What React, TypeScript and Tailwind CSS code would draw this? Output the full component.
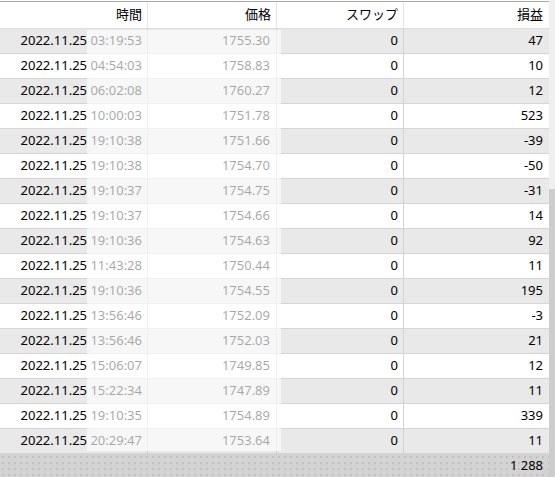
const rows = [
  { time: "03:19:53", price: "1755.30", swap: "0", profit: "47" },
  { time: "04:54:03", price: "1758.83", swap: "0", profit: "10" },
  { time: "06:02:08", price: "1760.27", swap: "0", profit: "12" },
  { time: "10:00:03", price: "1751.78", swap: "0", profit: "523" },
  { time: "19:10:38", price: "1751.66", swap: "0", profit: "-39" },
  { time: "19:10:38", price: "1754.70", swap: "0", profit: "-50" },
  { time: "19:10:37", price: "1754.75", swap: "0", profit: "-31" },
  { time: "19:10:37", price: "1754.66", swap: "0", profit: "14" },
  { time: "19:10:36", price: "1754.63", swap: "0", profit: "92" },
  { time: "11:43:28", price: "1750.44", swap: "0", profit: "11" },
  { time: "19:10:36", price: "1754.55", swap: "0", profit: "195" },
  { time: "13:56:46", price: "1752.09", swap: "0", profit: "-3" },
  { time: "13:56:46", price: "1752.03", swap: "0", profit: "21" },
  { time: "15:06:07", price: "1749.85", swap: "0", profit: "12" },
  { time: "15:22:34", price: "1747.89", swap: "0", profit: "11" },
  { time: "19:10:35", price: "1754.89", swap: "0", profit: "339" },
  { time: "20:29:47", price: "1753.64", swap: "0", profit: "11" },
];

const font = { fontFamily: '"Noto Sans", "Noto Sans CJK JP", sans-serif' };

function App() {
  return (
    <div className="w-[555px] h-[477px] overflow-hidden bg-white flex text-[13px] text-black" style={font}>
      <div className="relative w-[549px] flex flex-col">
        <div className="h-[1px] bg-white" />
        <div className="h-[1px] bg-[#a9a9a9]" />
        {/* header */}
        <div className="flex h-[27px] border-b border-[#dcdcdc] bg-white">
          <div className="w-[148px] flex items-center justify-end pr-[5px] border-r border-[#e5e5e5]">時間</div>
          <div className="w-[129px] flex items-center justify-end pr-[5px] border-r border-[#e5e5e5]">価格</div>
          <div className="w-[127px] flex items-center justify-end pr-[5px] border-r border-[#e5e5e5]">スワップ</div>
          <div className="flex-1 flex items-center justify-end pr-[6px]">損益</div>
        </div>
        {/* rows */}
        {rows.map((r, i) => (
          <div
            key={i}
            className={
              "flex h-[25px] border-b border-[#d4d4d4] " + (i % 2 === 0 ? "bg-[#e9e9e9]" : "bg-white")
            }
          >
            <div className="w-[148px] flex items-center justify-end pr-[5px] border-r border-[#d4d4d4]">
              2022.11.25 {r.time}
            </div>
            <div className="w-[129px] flex items-center justify-end pr-[6px] border-r border-[#d4d4d4]">{r.price}</div>
            <div className="w-[127px] flex items-center justify-end pr-[5px] border-r border-[#d4d4d4]">{r.swap}</div>
            <div className="flex-1 flex items-center justify-end pr-[6px]">{r.profit}</div>
          </div>
        ))}
        {/* footer */}
        <div className="flex-1 flex items-center justify-end pr-[6px] bg-[#d3d3d3] bg-[radial-gradient(#c2c2c2_1px,transparent_1px)] bg-[length:6px_6px]">
          1 288
        </div>
        {/* masked area over time and price */}
        <div className="absolute left-[87px] top-[30px] w-[194px] h-[421px] bg-white/65" />
      </div>
      <div className="w-[6px] flex flex-col">
        <div className="h-[189px] bg-[#f0f0f0]" />
        <div className="flex-1 bg-[#cdcdcd]" />
      </div>
    </div>
  );
}

export default App;
